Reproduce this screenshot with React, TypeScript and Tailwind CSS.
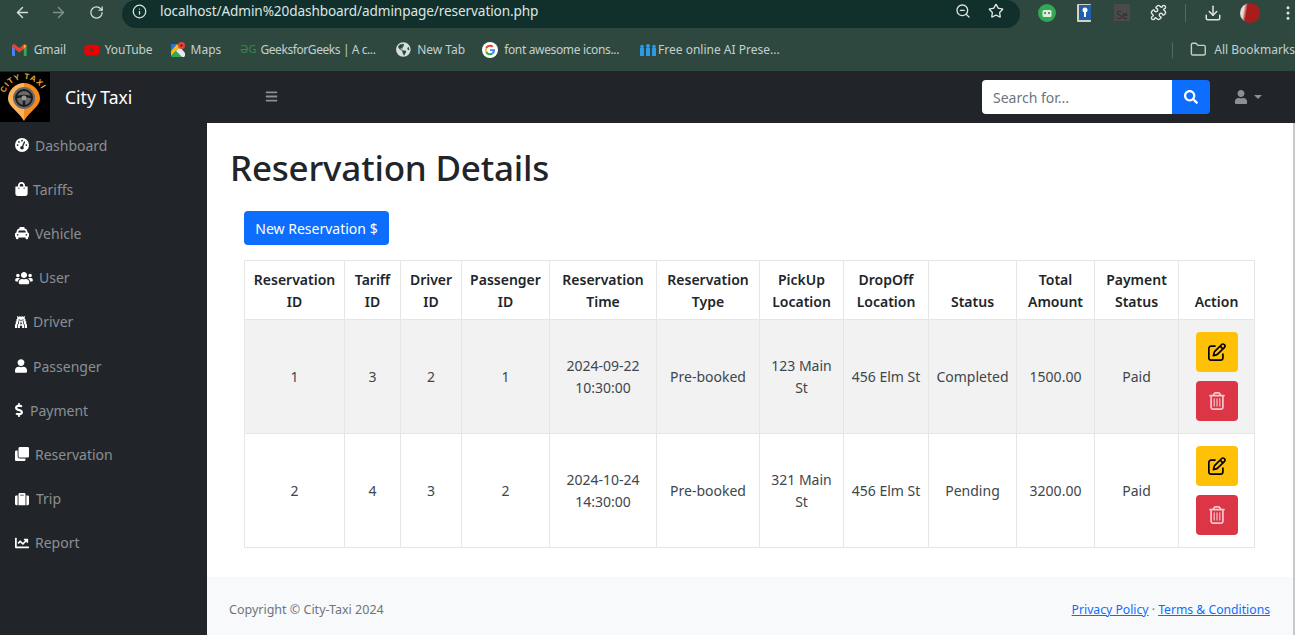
import React from "react";
import {
  FaShoppingBag,
  FaTaxi,
  FaUsers,
  FaGopuram,
  FaUser,
  FaDollarSign,
  FaClone,
  FaSuitcase,
  FaChartLine,
  FaSearch,
  FaBars,
  FaYoutube,
  FaGlobeAmericas,
} from "react-icons/fa";
import { FaGaugeHigh, FaRegPenToSquare, FaRegTrashCan } from "react-icons/fa6";
import { ArrowLeft, ArrowRight, RotateCw, Info, ZoomOut, Star, Puzzle, Download, Folder, EllipsisVertical } from "lucide-react";

const navItems = [
  { label: "Dashboard", icon: FaGaugeHigh, gap: "gap-[6px]", w: "w-[14px]" },
  { label: "Tariffs", icon: FaShoppingBag, gap: "gap-[5px]", w: "w-[13px]" },
  { label: "Vehicle", icon: FaTaxi, gap: "gap-[6px]", w: "w-[14px]" },
  { label: "User", icon: FaUsers, gap: "gap-[6px]", w: "w-[18px]" },
  { label: "Driver", icon: FaGopuram, gap: "gap-[6px]", w: "w-[12px]" },
  { label: "Passenger", icon: FaUser, gap: "gap-[6px]", w: "w-[12px]" },
  { label: "Payment", icon: FaDollarSign, gap: "gap-[7px]", w: "w-[8px]" },
  { label: "Reservation", icon: FaClone, gap: "gap-[6px]", w: "w-[14px]" },
  { label: "Trip", icon: FaSuitcase, gap: "gap-[7px]", w: "w-[14px]" },
  { label: "Report", icon: FaChartLine, gap: "gap-[6px]", w: "w-[14px]" },
];

const headers = [
  ["Reservation", "ID"],
  ["Tariff", "ID"],
  ["Driver", "ID"],
  ["Passenger", "ID"],
  ["Reservation", "Time"],
  ["Reservation", "Type"],
  ["PickUp", "Location"],
  ["DropOff", "Location"],
  ["Status"],
  ["Total", "Amount"],
  ["Payment", "Status"],
  ["Action"],
];

const colWidths = [100, 56, 61, 88, 107, 103, 84, 85, 88, 78, 84, 76];

const rows = [
  ["1", "3", "2", "1", "2024-09-22 10:30:00", "Pre-booked", "123 Main St", "456 Elm St", "Completed", "1500.00", "Paid"],
  ["2", "4", "3", "2", "2024-10-24 14:30:00", "Pre-booked", "321 Main St", "456 Elm St", "Pending", "3200.00", "Paid"],
];

const Gmail = () => (
  <svg width="15" height="12" viewBox="0 0 15 12">
    <path d="M0 2v9a1 1 0 0 0 1 1h2V5z" fill="#4285f4" />
    <path d="M15 2v9a1 1 0 0 1-1 1h-2V5z" fill="#34a853" />
    <path d="M0 2c0-2 2-2.500 3-1.500L7.500 4 12 .5c1-1 3-.5 3 1.500L12 5 7.500 8.500 3 5z" fill="#ea4335" />
    <path d="M12 .5 15 2 12 5z" fill="#fbbc04" />
  </svg>
);

const MapsIcon = () => (
  <svg width="14" height="15" viewBox="0 0 14 15">
    <path d="M0 2h6l-6 7z" fill="#1a73e8" />
    <path d="M0 9l6-7 3 3-9 9z" fill="#fbbc04" />
    <path d="M0 14l5-5 6 6H1z" fill="#34a853" />
    <path d="M9 5l5 6v3l-1 1h-2L5 9z" fill="#e8eaed" />
    <circle cx="10.500" cy="3.500" r="3.500" fill="#ea4335" />
    <circle cx="10.500" cy="3.500" r="1.200" fill="#7d1f18" />
  </svg>
);

const GoogleIcon = () => (
  <svg width="16" height="16" viewBox="0 0 48 48">
    <circle cx="24" cy="24" r="24" fill="#fff" />
    <path d="M39 24.500c0-1-.1-2-.3-3H24v5.700h8.400a7 7 0 0 1-3.100 4.700l5 3.800c2.900-2.700 4.700-6.600 4.700-11.200z" fill="#4285f4" />
    <path d="M24 40c4.200 0 7.700-1.400 10.300-3.800l-5-3.800c-1.400.9-3.200 1.500-5.300 1.500-4 0-7.500-2.700-8.700-6.400l-5.200 4C12.700 36.600 17.900 40 24 40z" fill="#34a853" />
    <path d="M15.300 27.500a9.600 9.600 0 0 1 0-6.100l-5.200-4a16 16 0 0 0 0 14.100z" fill="#fbbc05" />
    <path d="M24 14c2.300 0 4.300.8 5.900 2.300l4.400-4.400A15.500 15.500 0 0 0 24 8c-6.100 0-11.300 3.400-13.900 8.400l5.200 4C16.500 16.700 20 14 24 14z" fill="#ea4335" />
  </svg>
);

const SlidesIcon = () => (
  <svg width="16" height="14" viewBox="0 0 16 14">
    <rect x="0" y="5" width="4" height="8" fill="#2c9be6" />
    <rect x="6" y="5" width="4" height="8" fill="#2c9be6" />
    <rect x="12" y="5" width="4" height="8" fill="#2c9be6" />
    <circle cx="2" cy="3.500" r="1.800" fill="#2c9be6" />
    <circle cx="8" cy="3" r="2" fill="#2c9be6" />
    <circle cx="14" cy="3.500" r="1.800" fill="#2c9be6" />
  </svg>
);

const Logo = () => (
  <svg width="50" height="50" viewBox="0 0 50 50" className="shrink-0 overflow-visible bg-black">
    <path id="logoArc" d="M4 27 A20 20 0 0 1 44 27" fill="none" />
    <text fontSize="8" fontWeight="700" fill="#e8a33a" fontFamily="'Liberation Sans', sans-serif" letterSpacing="1">
      <textPath href="#logoArc" startOffset="6">CITY TAXI</textPath>
    </text>
    <path d="M24 49 C19 40 8 34 8 27 A16 16 0 0 1 24 11z" fill="#fbb45c" />
    <path d="M24 49 C29 40 40 34 40 27 A16 16 0 0 0 24 11z" fill="#f58a1f" />
    <circle cx="24" cy="26" r="11" fill="#6a6a6a" />
    <circle cx="24" cy="26" r="8" fill="none" stroke="#1c1c1c" strokeWidth="2" />
    <path d="M16 25l8-1 8 1M24 27v7" stroke="#1c1c1c" strokeWidth="2.500" fill="none" />
    <circle cx="24" cy="26" r="2.500" fill="#999" />
  </svg>
);

const ExtensionIcons = () => (
  <>
    <svg width="18" height="18" viewBox="0 0 18 18" className="ml-[18px] shrink-0">
      <circle cx="9" cy="9" r="9" fill="#34a853" />
      <rect x="4.500" y="6" width="9" height="7" rx="1.500" fill="#dfeee3" />
      <circle cx="7" cy="9" r="1" fill="#2b7a41" />
      <circle cx="11" cy="9" r="1" fill="#2b7a41" />
    </svg>
    <svg width="14" height="18" viewBox="0 0 14 18" className="ml-[21px] shrink-0">
      <rect width="14" height="18" rx="1" fill="#d7cfc4" />
      <rect x="2" y="1" width="12" height="15" fill="#1d5fb0" />
      <circle cx="8" cy="6" r="2.500" fill="#fff" />
      <rect x="7" y="7" width="2" height="6" fill="#fff" />
    </svg>
    <div className="ml-[23px] flex h-[17px] w-[16px] shrink-0 items-end justify-center bg-[#4a4a4a] text-[10px] leading-[12px] text-[#2f2f2f]">Se</div>
  </>
);

const App = () => {
  return (
    <div className="flex h-[635px] w-[1295px] flex-col overflow-hidden bg-white font-['Noto_Sans',sans-serif] text-[14px] text-[#212529]">
      {/* browser chrome */}
      <div className="h-[71px] shrink-0 bg-[#2e4840]">
        <div className="flex h-[28px] items-center pb-[3px]">
          <div className="flex w-[122px] shrink-0 items-center gap-[19px] pl-[14px] text-[#d6dfdb]">
            <ArrowLeft size={17} />
            <ArrowRight size={17} className="text-[#7d918b]" />
            <RotateCw size={15} className="ml-[3px]" />
          </div>
          <div className="mb-[-3px] flex h-[28px] w-[898px] shrink-0 items-center rounded-[14px] bg-[#11302b] pb-[6px] pl-[10px] text-[#dde5e2]">
            <Info size={15} />
            <span className="ml-[13px] flex-1 text-[13.600px] tracking-[-0.1px]">localhost/Admin%20dashboard/adminpage/reservation.php</span>
            <ZoomOut size={16} />
            <Star size={16} className="ml-[17px] mr-[16px]" />
          </div>
          <ExtensionIcons />
          <Puzzle size={17} className="ml-[20px] shrink-0 text-[#dde5e2]" />
          <div className="ml-[18px] h-[18px] w-px shrink-0 bg-[#4e6a62]" />
          <Download size={18} className="ml-[18px] shrink-0 text-[#dde5e2]" />
          <div className="ml-[18px] h-[20px] w-[20px] shrink-0 rounded-full bg-[linear-gradient(100deg,#e9dcd6_20%,#a81c1c_35%)]" />
          <EllipsisVertical size={18} className="ml-[19px] shrink-0 text-[#dde5e2]" />
        </div>
        <div className="flex h-[43px] items-center whitespace-nowrap pl-[12px] text-[12px] text-[#c4d0cc]">
          <Gmail />
          <span className="ml-[7px] tracking-[-0.1px]">Gmail</span>
          <FaYoutube size={16} className="ml-[18px] text-[#ee0000]" />
          <span className="ml-[5px] tracking-[-0.1px]">YouTube</span>
          <span className="ml-[18px]"><MapsIcon /></span>
          <span className="ml-[6px]">Maps</span>
          <span className="ml-[19px] text-[11px] text-[#2f8d46]">ƏG</span>
          <span className="ml-[4px] tracking-[-0.42px]">GeeksforGeeks | A c...</span>
          <FaGlobeAmericas size={15} className="ml-[21px] text-[#d5dfdb]" />
          <span className="ml-[6px]">New Tab</span>
          <span className="ml-[17px]"><GoogleIcon /></span>
          <span className="ml-[6px] tracking-[-0.35px]">font awesome icons...</span>
          <span className="ml-[21px]"><SlidesIcon /></span>
          <span className="ml-[2px]">Free online AI Prese...</span>
          <div className="ml-[392px] h-[16px] w-px bg-[#4e6a62]" />
          <Folder size={17} className="ml-[17px]" />
          <span className="ml-[8px]">All Bookmarks</span>
        </div>
      </div>

      {/* top navbar */}
      <div className="flex h-[52px] shrink-0 items-center bg-[#212529] pr-[33px]">
        <Logo />
        <span className="ml-[15px] w-[200px] text-[17.500px] text-white">City Taxi</span>
        <FaBars size={13} className="mt-[-2px] text-[#8c9095]" />
        <div className="ml-auto flex h-[34px] w-[228px]">
          <div className="flex flex-1 items-center rounded-l-[4px] bg-white pl-[11px] text-[#6c757d]">Search for...</div>
          <div className="flex w-[38px] items-center justify-center rounded-r-[4px] bg-[#0d6efd] text-white">
            <FaSearch size={14} />
          </div>
        </div>
        <FaUser size={14} className="ml-[24px] text-[#8c9095]" />
        <span className="ml-[6px] h-0 w-0 border-x-[4px] border-t-[4px] border-x-transparent border-t-[#8c9095]" />
      </div>

      <div className="flex min-h-0 flex-1">
        {/* sidebar */}
        <aside className="w-[207px] shrink-0 bg-[#212529] pl-[15px]">
          {navItems.map((item) => (
            <div key={item.label} className={`flex h-[44.200px] items-center text-[#8b8f94] ${item.gap}`}>
              <item.icon size={14} className={`${item.w} text-white`} />
              <span>{item.label}</span>
            </div>
          ))}
        </aside>

        {/* main */}
        <div className="flex min-w-0 flex-1 flex-col border-r-2 border-[#c9c9c9]">
          <main className="flex-1 pl-[23px] pr-[36px]">
            <h1 className="mt-[20px] text-[35px] font-medium leading-[50px] tracking-[-0.2px]">Reservation Details</h1>
            <div className="pl-[14px]">
              <button className="mt-[18px] h-[34px] w-[145px] rounded-[4px] bg-[#0d6efd] text-center text-[14px] text-white">
                New Reservation $
              </button>
              <table className="mt-[15px] w-[1010px] table-fixed border-collapse text-center text-[14px] leading-[22px]">
                <colgroup>
                  {colWidths.map((w, i) => (
                    <col key={i} style={{ width: w }} />
                  ))}
                </colgroup>
                <thead>
                  <tr className="h-[59px]">
                    {headers.map((h, i) => (
                      <th key={i} className="border border-[#e6e6e6] px-[2px] pb-[6px] align-bottom font-semibold">
                        {h.map((l) => (
                          <div key={l}>{l}</div>
                        ))}
                      </th>
                    ))}
                  </tr>
                </thead>
                <tbody>
                  {rows.map((row, ri) => (
                    <tr key={ri} className={`h-[114px] ${ri === 0 ? "bg-[#f2f2f2]" : "bg-white"}`}>
                      {row.map((cell, ci) => (
                        <td key={ci} className="border border-[#e6e6e6] px-[4px] text-[#40464c]">
                          {ci === 6 ? <div className="mx-auto w-[64px]">{cell}</div> : ci === 4 ? <div className="mx-auto w-[80px]">{cell}</div> : cell}
                        </td>
                      ))}
                      <td className="border border-[#e6e6e6]">
                        <div className="flex flex-col items-center gap-[9px]">
                          <div className="flex h-[40px] w-[42px] items-center justify-center rounded-[4px] bg-[#ffc107] text-black">
                            <FaRegPenToSquare size={18} />
                          </div>
                          <div className="flex h-[40px] w-[42px] items-center justify-center rounded-[4px] bg-[#dc3545] text-[#f6c9ce]">
                            <FaRegTrashCan size={18} />
                          </div>
                        </div>
                      </td>
                    </tr>
                  ))}
                </tbody>
              </table>
            </div>
          </main>
          <footer className="flex h-[58px] shrink-0 items-center justify-between bg-[#f8f9fa] pl-[22px] pr-[23px] pt-[8px] text-[12.500px] text-[#6c757d]">
            <span>Copyright © City-Taxi 2024</span>
            <span className="text-[12.200px]">
              <a className="text-[#0d6efd] underline">Privacy Policy</a>
              {" · "}
              <a className="text-[#0d6efd] underline">Terms &amp; Conditions</a>
            </span>
          </footer>
        </div>
      </div>
    </div>
  );
};

export default App;
